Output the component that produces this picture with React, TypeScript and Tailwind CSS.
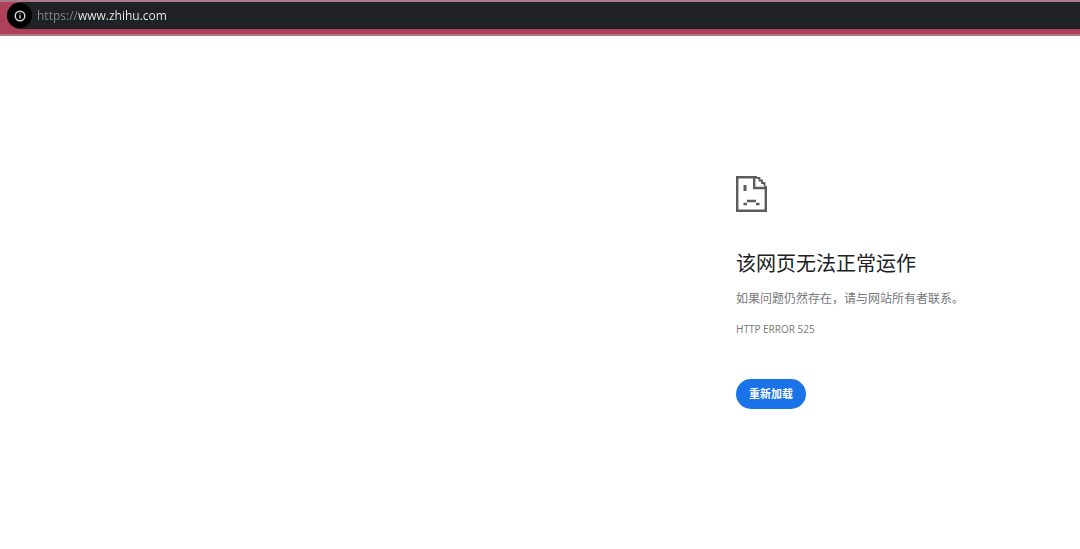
import React from "react";

const AddressBar: React.FC = () => {
  return (
    <header className="h-9 border-t-2 border-b-2 border-t-[#ac7a8c] border-b-[#a57a83] bg-[#ae4059] pl-[7px]">
      <form className="flex h-[27px] items-center rounded-l-full bg-[#202124]" onSubmit={(e) => e.preventDefault()}>
        <button
          type="button"
          aria-label="查看网站信息"
          className="flex size-[25px] shrink-0 items-center justify-center rounded-full bg-black text-[#d5d6d8]"
        >
          <svg viewBox="0 0 12 12" className="size-3" fill="none" stroke="currentColor">
            <circle cx="6" cy="6" r="4.8" strokeWidth="1.4" />
            <path d="M6 5.3v3.2M6 3.2v1.1" strokeWidth="1.4" />
          </svg>
        </button>
        {/* scheme is dimmed, host is bright */}
        <input
          type="text"
          aria-label="地址栏"
          spellCheck={false}
          defaultValue="https://www.zhihu.com"
          className="ml-[5px] h-6 min-w-0 flex-1 bg-linear-to-r from-[#85888c] from-[41px] to-[#f1f3f4] to-[41px] bg-clip-text font-['Open_Sans','Noto_Sans_CJK_SC',sans-serif] text-xs text-transparent outline-none"
        />
      </form>
    </header>
  );
};

const SadPageIcon: React.FC = () => {
  return (
    <svg viewBox="0 0 31 37" className="h-[37px] w-[31px]" fill="none" stroke="#5b5b5b" strokeWidth="2.4">
      <path d="M21 1.2H1.2v33.6h28.6V10" />
      <path d="M18.2 1v11h12" />
      <path d="M21 2h2.5v2.5H26v2.5h2.5V10" strokeWidth="1.8" />
      <path d="M9 9v6" strokeWidth="3" />
      <path d="M11 25h9M7.5 28h3.5M20 28h3.5" strokeWidth="2.4" />
    </svg>
  );
};

const App: React.FC = () => {
  return (
    <div className="min-h-screen bg-white font-['Open_Sans','Noto_Sans_CJK_SC',sans-serif]">
      <AddressBar />
      <main className="ml-[68.15%] pt-35 text-[#75787c]">
        <SadPageIcon />
        <h1 className="mt-9 text-xl leading-[30px] text-[#202124]">该网页无法正常运作</h1>
        <p className="mt-[10px] text-xs leading-5">如果问题仍然存在，请与网站所有者联系。</p>
        <div className="mt-[10px] text-[10px] leading-5">HTTP ERROR 525</div>
        <button
          type="button"
          onClick={() => window.location.reload()}
          className="mt-10 h-[30px] rounded-full bg-[#1a73e8] px-[13px] text-[11px] font-bold text-white"
        >
          重新加载
        </button>
      </main>
    </div>
  );
};

export default App;
